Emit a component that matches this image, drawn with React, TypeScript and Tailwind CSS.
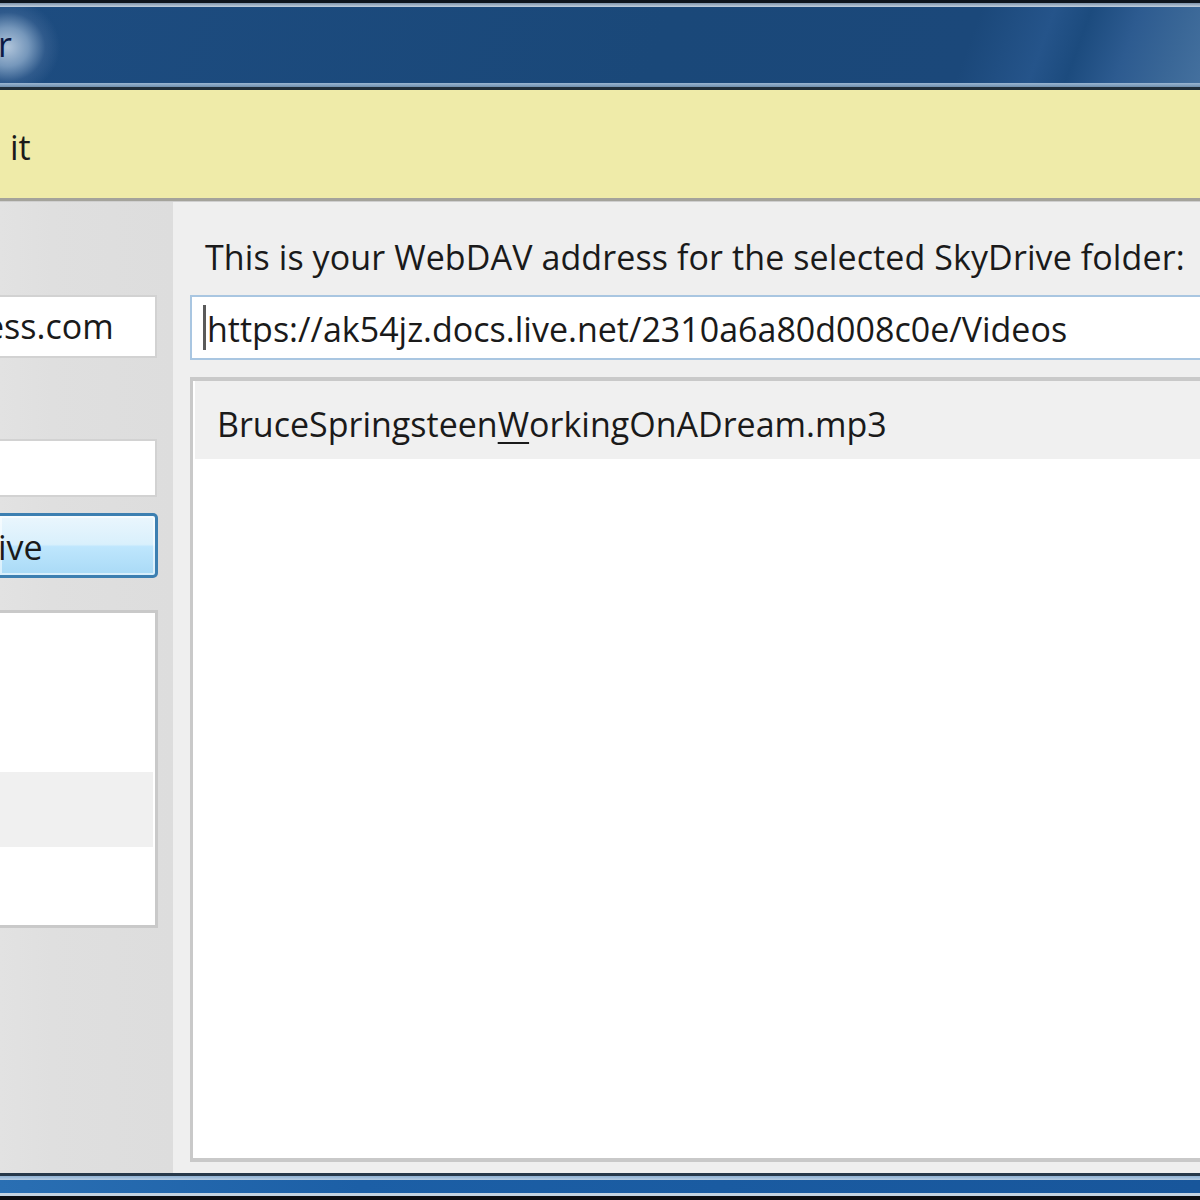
import React from "react";

// Zoomed crop of a Windows 7 style "SkyDrive WebDAV" dialog.
const font = "font-['Open_Sans','Noto_Sans',sans-serif]";

const TitleBar = () => (
  <div>
    <div className="h-[3px] bg-[#0e151d]" />
    <div className="h-[4px] bg-[linear-gradient(to_bottom,#7d93ab,#c3d1df)]" />
    <div className="relative h-[76px] overflow-hidden bg-[linear-gradient(110deg,#1d4c80_0%,#1a4879_55%,#1b487a_80%,#25548a_86%,#1c4b7e_89%,#2d5b90_93%,#3a6797_97%,#44709e_100%)]">
      {/* glow behind the caption text */}
      <div className="absolute left-[-45px] top-[-8px] h-[96px] w-[105px] rounded-full bg-[radial-gradient(closest-side,rgba(185,204,224,0.95)_0%,rgba(140,170,202,0.8)_40%,rgba(70,108,155,0.45)_72%,rgba(30,75,128,0)_100%)]" />
      <span className={`relative ml-[-2px] block pt-[17px] text-[34px] leading-[40px] text-[#0c1b45] ${font}`}>
        r
      </span>
    </div>
    <div className="h-[4px] bg-[linear-gradient(to_bottom,#9ab6d2,#6f8fae)]" />
    <div className="h-[3px] bg-[#1f2d39]" />
  </div>
);

const InfoBar = () => (
  <div>
    <div className="flex h-[108px] items-start bg-[#efeba9] pl-[10px] pt-[37px]">
      <span className={`text-[34px] leading-[40px] text-[#1a1a1a] ${font}`}>it</span>
    </div>
    <div className="h-[3px] bg-[#a4a39b]" />
    <div className="h-[1px] bg-[#cfcfcf]" />
  </div>
);

const LeftPanel = () => (
  <div className="flex w-[173px] shrink-0 flex-col bg-[linear-gradient(to_right,#e2e2e2_0%,#dfdfdf_30%,#dddddd_100%)] pt-[93px]">
    <div className="flex h-[63px] w-[157px] items-start overflow-hidden border-y-2 border-r-2 border-[#d2d2d2] bg-white">
      <span className={`ml-[-15px] mt-[9px] whitespace-nowrap text-[34px] leading-[40px] text-[#1a1a1a] ${font}`}>ess.com</span>
    </div>
    <div className="mt-[81px] h-[58px] w-[157px] border-y-2 border-r-2 border-[#d2d2d2] bg-white" />
    <div className="mt-[16px] flex h-[65px] w-[158px] items-center rounded-r-[5px] border-y-[3px] border-r-[3px] border-[#3c7fb1] bg-[linear-gradient(to_bottom,#eaf6fd_0%,#d9f0fc_48%,#bee6fd_52%,#a9daf6_100%)] shadow-[inset_0_0_0_2px_rgba(255,255,255,0.55)]">
      <span className={`ml-[-2px] mt-[2px] text-[34px] leading-[40px] text-[#1a1a1a] ${font}`}>ive</span>
    </div>
    <div className="mt-[32px] flex h-[318px] w-[158px] flex-col border-y-[3px] border-r-[3px] border-[#c9c9c9] bg-white">
      <div className="mt-[159px] h-[75px] w-[153px] bg-[#f0f0f0]" />
    </div>
  </div>
);

const RightPanel = () => (
  <div className="flex flex-1 flex-col bg-[#efefef] pb-[11px] pl-[17px]">
    <div className="h-[93px] pl-[15px] pt-[35px]">
      <span className={`whitespace-nowrap text-[34px] leading-[40px] tracking-[0.1px] text-[#1a1a1a] ${font}`}>
        This is your WebDAV address for the selected SkyDrive folder:
      </span>
    </div>
    <div className="flex h-[65px] items-start border-y-2 border-l-2 border-[#a9c6e1] bg-white pl-[11px]">
      <span className="mr-[1px] mt-[8px] inline-block h-[45px] w-[3px] bg-[#5a5a5a]" />
      <span className={`mt-[12px] whitespace-nowrap text-[34px] leading-[40px] text-[#1a1a1a] ${font}`}>
        https://ak54jz.docs.live.net/2310a6a80d008c0e/Videos
      </span>
    </div>
    <div className="mt-[17px] flex-1 border-y-[4px] border-l-[3px] border-[#c9c9c9] bg-white pl-[2px]">
      <div className="flex h-[78px] items-start bg-[#f0f0f0] pl-[22px] pt-[23px]">
        <span className={`whitespace-nowrap text-[34px] leading-[40px] text-[#1a1a1a] ${font}`}>
          BruceSpringsteen
          <span className="underline decoration-[2px] underline-offset-[5px]">W</span>
          orkingOnADream.mp3
        </span>
      </div>
    </div>
  </div>
);

const BottomEdge = () => (
  <div>
    <div className="h-[3px] bg-[#26384a]" />
    <div className="h-[4px] bg-[linear-gradient(to_bottom,#8fb1d3,#b7cde3)]" />
    <div className="h-[13px] bg-[linear-gradient(to_right,#2a6fb3_0%,#1c5fa6_30%,#1a5ba1_60%,#18569b_100%)]" />
    <div className="h-[3px] bg-[#c3d3e2]" />
    <div className="h-[4px] bg-[#0b0d12]" />
  </div>
);

export default function App() {
  return (
    <div className="h-[1200px] w-[1200px] overflow-hidden bg-[#efefef]">
      <TitleBar />
      <InfoBar />
      <div className="flex h-[971px]">
        <LeftPanel />
        <RightPanel />
      </div>
      <BottomEdge />
    </div>
  );
}
